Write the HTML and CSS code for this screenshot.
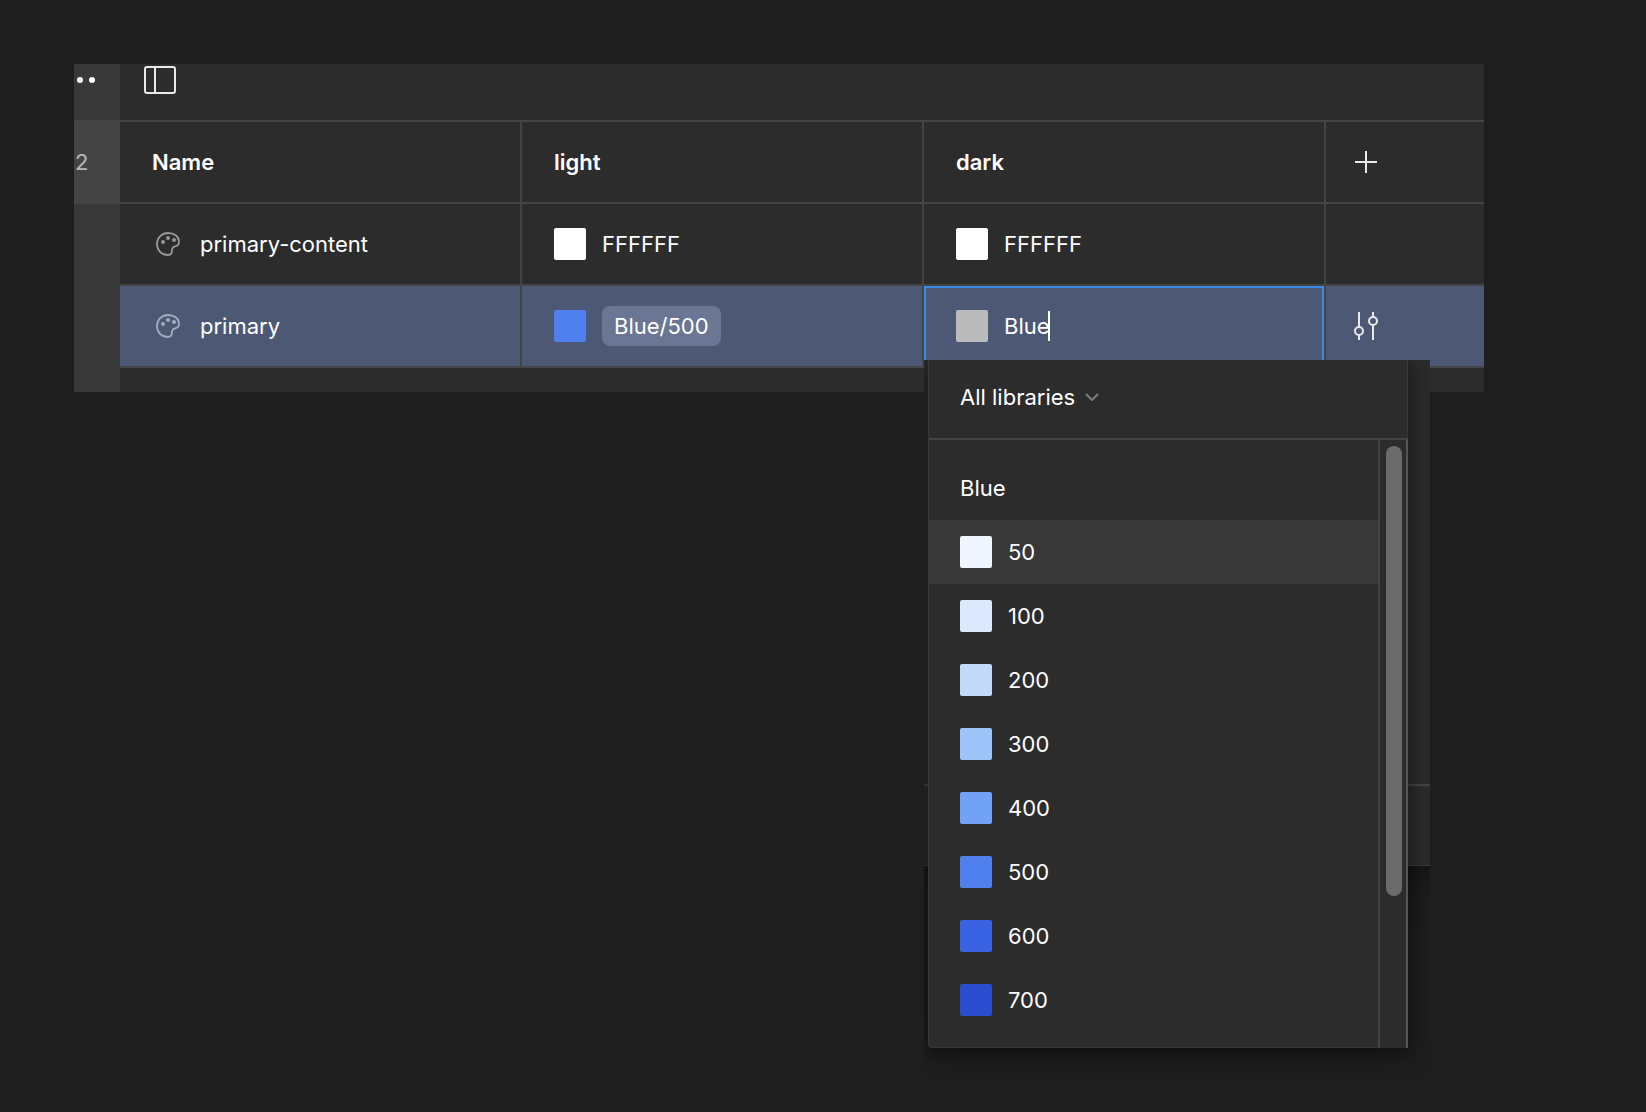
FILE: index.html
```html
<!DOCTYPE html>
<html lang="en">
<head>
<meta charset="utf-8">
<title>Variables</title>
<link rel="stylesheet" href="styles.css">
</head>
<body>
<svg class="sprite" aria-hidden="true">
  <symbol id="palette" viewBox="0 0 24 24">
    <path d="M12 1C5.900 1 1 5.900 1 12c0 6.100 4.700 11 10.600 11 2.800 0 4.200-1.200 4.200-3.400 0-3.300.8-5 3.400-5.300C21.600 14 23 12.300 23 9.500 22.800 4.400 18 1 12 1Z" fill="none" stroke="currentColor" stroke-width="1.800"/>
    <circle cx="7" cy="10" r="2" fill="currentColor"/>
    <circle cx="12" cy="6" r="2" fill="currentColor"/>
    <circle cx="18" cy="8" r="2" fill="currentColor"/>
  </symbol>
</svg>
<main class="panel">
  <aside class="rail">
    <div class="rail-top">
      <button class="icon-button more" aria-label="More">
        <svg width="22" height="8" viewBox="0 0 22 8"><circle cx="6" cy="4" r="3" fill="#fff"/><circle cx="18" cy="4" r="3" fill="#fff"/></svg>
      </button>
    </div>
    <div class="rail-count">2</div>
  </aside>
  <section class="content">
    <div class="toolbar">
      <button class="icon-button" aria-label="Toggle sidebar">
        <svg width="32" height="28" viewBox="0 0 32 28" fill="none" stroke="#eaeaea" stroke-width="2"><rect x="1" y="1" width="30" height="26" rx="2"/><path d="M11 1v26"/></svg>
      </button>
    </div>
    <table class="variables">
      <colgroup><col><col><col><col class="col-action"></colgroup>
      <thead>
        <tr>
          <th scope="col">Name</th>
          <th scope="col">light</th>
          <th scope="col">dark</th>
          <th scope="col" class="action">
            <button class="icon-button" aria-label="Add mode">
              <svg width="24" height="28" viewBox="0 0 24 28" stroke="#eaeaea" stroke-width="2"><path d="M12 3v22M1 14h22"/></svg>
            </button>
          </th>
        </tr>
      </thead>
      <tbody>
        <tr>
          <td><div class="cell name"><svg class="type" width="24" height="24"><use href="#palette"/></svg><span>primary-content</span></div></td>
          <td><div class="cell"><span class="swatch white"></span><span>FFFFFF</span></div></td>
          <td><div class="cell"><span class="swatch white"></span><span>FFFFFF</span></div></td>
          <td></td>
        </tr>
        <tr class="selected">
          <td><div class="cell name"><svg class="type" width="24" height="24"><use href="#palette"/></svg><span>primary</span></div></td>
          <td><div class="cell"><span class="swatch blue-500"></span><span class="chip">Blue/500</span></div></td>
          <td class="editing">
            <div class="cell"><span class="swatch gray"></span><span class="field"><input class="value" aria-label="dark value" value="Blue"><span class="caret"></span></span></div>
            <div class="popover">
              <div class="underlay"><div class="underlay-footer"></div></div>
              <div class="menu">
                <button class="library">All libraries
                  <svg width="14" height="8" viewBox="0 0 14 8" fill="none" stroke="#7d7d7d" stroke-width="2"><path d="M1 1l6 6 6-6"/></svg>
                </button>
                <div class="menu-body">
                  <div class="options">
                    <h2 class="group">Blue</h2>
                    <ul class="list">
                      <li class="option active"><span class="swatch blue-50"></span>50</li>
                      <li class="option"><span class="swatch blue-100"></span>100</li>
                      <li class="option"><span class="swatch blue-200"></span>200</li>
                      <li class="option"><span class="swatch blue-300"></span>300</li>
                      <li class="option"><span class="swatch blue-400"></span>400</li>
                      <li class="option"><span class="swatch blue-500"></span>500</li>
                      <li class="option"><span class="swatch blue-600"></span>600</li>
                      <li class="option"><span class="swatch blue-700"></span>700</li>
                    </ul>
                  </div>
                  <div class="track"><div class="thumb"></div></div>
                </div>
              </div>
            </div>
          </td>
          <td class="action">
            <button class="icon-button" aria-label="Edit variable">
              <svg width="24" height="28" viewBox="0 0 24 28" fill="none" stroke="#eaeaea" stroke-width="2"><path d="M5 0v15M5 23v5M19 0v5M19 13v15"/><circle cx="5" cy="19" r="4"/><circle cx="19" cy="9" r="4"/></svg>
            </button>
          </td>
        </tr>
      </tbody>
    </table>
  </section>
</main>
</body>
</html>
```
FILE: styles.css
```css
* { box-sizing: border-box; }

body {
  margin: 0;
  padding: 64px 162px 36px 74px;
  min-height: 100vh;
  background: #1e1e1e;
  color: #fff;
  font: 400 22px/32px Inter, "Liberation Sans", sans-serif;
}

.sprite { position: absolute; width: 0; height: 0; }

svg { display: block; }

button, input { font: inherit; color: inherit; }

.icon-button {
  display: block;
  padding: 0;
  border: 0;
  background: none;
}

.panel {
  display: grid;
  grid-template-columns: 46px 1fr;
  background: #2c2c2c;
}

.rail { background: #383838; }
.rail-top { height: 56px; padding-top: 12px; }
.rail-count {
  height: 84px;
  padding: 26px 1px;
  background: #444;
  color: #b8b8b8;
}

.content { padding-bottom: 24px; }

.toolbar {
  height: 58px;
  padding: 2px 24px;
  border-bottom: 2px solid #444;
}

.variables {
  width: 100%;
  table-layout: fixed;
  border-spacing: 0;
}
.col-action { width: 158px; }

th, td {
  height: 82px;
  padding: 0 32px;
  border-right: 2px solid #444;
  border-bottom: 2px solid #444;
  text-align: left;
}
th { font-weight: 600; }
th:last-child, td:last-child { border-right: 0; }
.action { padding-left: 28px; }

.cell { display: flex; align-items: center; gap: 16px; }
.name { padding-left: 4px; gap: 20px; }
.type { color: #989898; }

.selected td { background: #4d5874; background-clip: padding-box; border-color: #444; }
.selected .type { color: #a3abbd; }

.swatch { flex: none; width: 32px; height: 32px; border-radius: 2px; }
.white { background: #fff; }
.gray { background: #bbb; }
.blue-50 { background: #eff6ff; }
.blue-100 { background: #dce8fd; }
.blue-200 { background: #c4dafb; }
.blue-300 { background: #9cc4f9; }
.blue-400 { background: #71a2f5; }
.blue-500 { background: #4f80ee; }
.blue-600 { background: #3962e3; }
.blue-700 { background: #2b4dd0; }

.chip {
  padding: 4px 12px;
  border-radius: 8px;
  background: #6a7694;
}

.editing { position: relative; box-shadow: inset 2px 2px #3b8ae6, inset -2px 0 #3b8ae6; }

.field { display: flex; align-items: center; }
.value {
  field-sizing: content;
  padding: 0;
  border: 0;
  outline: 0;
  background: none;
}
.caret { width: 2px; height: 30px; margin-left: -2px; background: #fff; }

.popover {
  position: absolute;
  top: 74px;
  left: 0;
  width: 506px;
  padding: 0 22px 28px 4px;
  overflow: hidden;
  background: #1e1e1e;
}

/* Window that the menu opens above */
.underlay {
  position: absolute;
  top: 0;
  right: 0;
  left: 0;
  height: 506px;
  background: #2c2c2c;
  border-bottom: 1px solid #3a3a3a;
  box-shadow: 0 10px 36px rgba(0, 0, 0, .5);
}
.underlay-footer {
  height: 82px;
  margin-top: 424px;
  border-top: 2px solid #444;
}

.menu {
  position: relative;
  border-left: 1px solid #383838;
  border-radius: 0 0 0 4px;
  background: #2c2c2c;
  box-shadow: 0 4px 28px rgba(0, 0, 0, .5), 0 4px 10px rgba(0, 0, 0, .15);
}

.library {
  display: flex;
  align-items: center;
  gap: 10px;
  width: 100%;
  height: 80px;
  padding: 0 31px 4px;
  border: 0;
  border-bottom: 2px solid #444;
  background: none;
  box-shadow: inset -1px 0 #383838;
}

.menu-body { display: flex; }
.options {
  flex: 1;
  padding-bottom: 15px;
  border-bottom: 1px solid #383838;
  border-radius: 0 0 0 4px;
}
.group {
  margin: 0;
  padding: 32px 31px 16px;
  font: inherit;
}
.list { margin: 0; padding: 0; list-style: none; }
.option {
  display: flex;
  align-items: center;
  gap: 16px;
  height: 64px;
  padding: 0 31px;
}
.active { background: #383838; }

.track {
  width: 30px;
  padding: 6px 4px 0 6px;
  border: solid #444;
  border-width: 0 2px;
  border-right-color: #555;
}
.thumb { height: 450px; border-radius: 8px; background: #6b6b6b; }
```
